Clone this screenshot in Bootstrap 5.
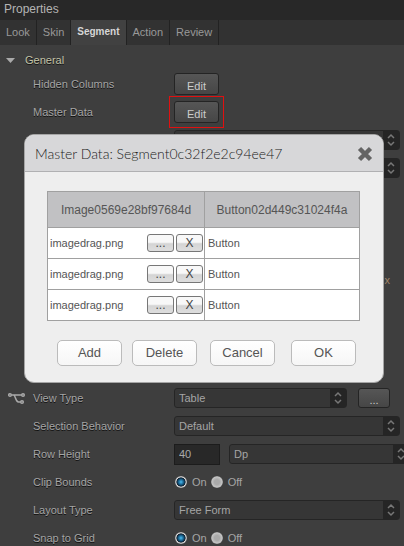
<!DOCTYPE html>
<html lang="en">
<head>
<meta charset="utf-8">
<meta name="viewport" content="width=device-width, initial-scale=1">
<title>Properties</title>
<link href="https://cdn.jsdelivr.net/npm/bootstrap@5.3.0/dist/css/bootstrap.min.css" rel="stylesheet">
<style>
body{background:#3e3e3e;color:#a5a5a5;font:11px/14px "Liberation Sans",Arial,sans-serif}
.panel-title{background:#282828;color:#b4b4b4;font-size:12px;line-height:18px;padding:0 4px;height:20px}
.panel-tabs{background:#323232;height:25px}
.panel-tabs .nav-link{color:#999;padding:0 6px;line-height:24px;border-radius:0;border-right:1px solid #222}
.panel-tabs .nav-link.active{color:#d6d6d6;background:#414141;font-size:10px;font-weight:bold}
.section-head{height:25px;padding:5px 9px 0 5px;color:#c3c3a8;text-shadow:0 1px 0 #111;background:none;border:0}
.prop{height:28px;padding-right:4px}
.prop-name{width:174px;padding-left:33px;text-shadow:0 1px 0 #111;position:relative}
.prop-name svg{position:absolute;left:8px;top:1px}
.prop-edge{padding-right:0;margin-right:-6px}
.dark-select{height:20px;color:#a5a5a5;border:1px solid #252525;border-radius:3px;padding:0 20px 0 4px;appearance:none;min-width:0;
 background:url("data:image/svg+xml,%3Csvg xmlns='http://www.w3.org/2000/svg' width='16' height='18' fill='none' stroke='%23777' stroke-width='1.5'%3E%3Cpath d='M5 7l3-3 3 3M5 11l3 3 3-3'/%3E%3C/svg%3E") right center no-repeat,linear-gradient(90deg,#363636 calc(100% - 16px),#252525 0)}
.dark-input{width:46px;height:21px;background:#282828;border:1px solid #1c1c1c;color:#aaa;padding:0 4px}
.dark-btn{height:22px;width:45px;padding:3px 0 0;font-size:11px;line-height:18px;color:#ccc;border:1px solid #242424;border-radius:3px;background:linear-gradient(#565656,#464646)}
.dark-btn.more{width:32px;height:20px;line-height:14px}
.marked{border:1px solid #e01010;padding:4px;margin-left:-5px}
.dot-radio{appearance:none;width:12px;height:12px;border-radius:50%;margin:0 5px 0 1px;background:radial-gradient(circle,#aaa 30%,#c4c4c4 60%,#888 72%)}
.dot-radio:checked{background:radial-gradient(circle at 50% 50%,#3da5d8 8%,#0f4a70 38%,#101c28 50%,#ddd 58%,#999 72%)}
.covered{margin-bottom:84px}
.after-cover{margin-bottom:90px;padding-right:14px;color:#a08468}
.dialog-layer{position:absolute;top:134px;left:0;right:0;padding:0 20px 0 24px}
.dialog{background:#eee;color:#555;border:1px solid #a5a5a5;border-radius:10px;overflow:hidden}
.dialog-head{background:#d7d7d9;border-bottom:1px solid #b0b0b2;height:37px;padding:1px 10px 0}
.dialog-head h1{font:300 14px/20px Lato,sans-serif;color:#222}
.dialog-body{padding:19px 23px 0 22px}
.data-grid{width:100%;table-layout:fixed;border-collapse:collapse;background:#fff}
.data-grid th,.data-grid td{border:1px solid #a0a0a0}
.data-grid th{height:36px;background:#c1c1c3;font-size:12px;font-weight:normal;text-align:center;padding:0}
.data-grid th:first-child{width:157px}
.data-grid td{height:31px;padding:0 1px 0 3px}
.data-grid td:first-child{padding-left:2px}
.cell-btn{width:27px;height:18px;padding:0;border:1px solid #777;border-radius:3px;color:#444;font-size:12px;line-height:16px;background:linear-gradient(#f8f8f8 45%,#d4d4d4 55%,#dedede)}
.cell-pair{gap:2px}
.dialog-foot{padding:19px 27px 16px 32px}
.pair-a{gap:10px}
.foot-btn{width:65px;height:26px;padding:0;border:1px solid #bbb;border-radius:5px;color:#555;font-size:13px;line-height:22px;background:linear-gradient(#fff,#f6f6f6)}
.more-gap{margin:0 10px 0 11px}
.unit-gap{margin-left:9px}
</style>
</head>
<body>
<main class="vh-100 overflow-hidden">
<header class="panel-title">Properties</header>
<nav class="nav panel-tabs flex-nowrap">
<a class="nav-link" href="#look">Look</a><a class="nav-link" href="#skin">Skin</a><a class="nav-link active" href="#segment">Segment</a><a class="nav-link" href="#action">Action</a><a class="nav-link" href="#review">Review</a>
</nav>
<button class="section-head d-flex align-items-center gap-2 w-100" type="button"><svg width="12" height="7"><path d="M1 1h9L5.500 6z" fill="#aaa"/></svg>General</button>
<div class="prop d-flex align-items-center"><span class="prop-name">Hidden Columns</span><button class="btn dark-btn" type="button">Edit</button></div>
<div class="prop d-flex align-items-center"><span class="prop-name">Master Data</span><span class="marked d-flex"><button class="btn dark-btn" type="button">Edit</button></span></div>
<div class="prop d-flex align-items-center"><span class="prop-name"></span><select class="dark-select flex-fill" aria-label="Data source"><option></option></select></div>
<div class="prop covered d-flex align-items-center"><span class="prop-name"></span><select class="dark-select flex-fill" aria-label="Template"><option></option></select></div>
<div class="prop after-cover d-flex align-items-center justify-content-end"><span>x</span></div>
<div class="prop d-flex align-items-center"><label class="prop-name" for="view"><svg width="18" height="13" fill="none" stroke="#aaa" stroke-width="1.500"><circle cx="2" cy="3" r="1.300"/><circle cx="15" cy="3" r="1.300"/><circle cx="14" cy="10" r="1.300"/><path d="M3.500 3h10M5.500 3c2 0 2 7 5 7h2"/></svg>View Type</label><select id="view" class="dark-select flex-fill"><option>Table</option></select><button class="btn dark-btn more more-gap" type="button">...</button></div>
<div class="prop d-flex align-items-center"><label class="prop-name" for="sel">Selection Behavior</label><select id="sel" class="dark-select flex-fill"><option>Default</option></select></div>
<div class="prop prop-edge d-flex align-items-center"><label class="prop-name" for="rowh">Row Height</label><input id="rowh" class="dark-input" value="40"><select class="dark-select flex-fill unit-gap" aria-label="Unit"><option>Dp</option></select></div>
<div class="prop d-flex align-items-center"><span class="prop-name">Clip Bounds</span><input class="dot-radio" type="radio" name="clip" id="c1" checked><label for="c1">On</label><input class="dot-radio ms-1" type="radio" name="clip" id="c2"><label for="c2">Off</label></div>
<div class="prop d-flex align-items-center"><label class="prop-name" for="lay">Layout Type</label><select id="lay" class="dark-select flex-fill"><option>Free Form</option></select></div>
<div class="prop d-flex align-items-center"><span class="prop-name">Snap to Grid</span><input class="dot-radio" type="radio" name="snap" id="s1" checked><label for="s1">On</label><input class="dot-radio ms-1" type="radio" name="snap" id="s2"><label for="s2">Off</label></div>
</main>
<div class="dialog-layer">
<section class="dialog" role="dialog" aria-labelledby="dlg-title">
<div class="dialog-head d-flex align-items-center justify-content-between"><h1 id="dlg-title" class="m-0 text-nowrap">Master Data: Segment0c32f2e2c94ee47</h1><button type="button" class="border-0 bg-transparent p-0 d-flex" aria-label="Close"><svg width="16" height="16" stroke="#646464" stroke-width="4.500"><path d="M2.500 2.500l11 11M13.500 2.500l-11 11"/></svg></button></div>
<div class="dialog-body">
<table class="data-grid">
<thead><tr><th scope="col">Image0569e28bf97684d</th><th scope="col">Button02d449c31024f4a</th></tr></thead>
<tbody>
<tr><td><div class="d-flex align-items-center cell-pair"><span class="me-auto">imagedrag.png</span><button class="cell-btn" type="button">...</button><button class="cell-btn" type="button">X</button></div></td><td>Button</td></tr>
<tr><td><div class="d-flex align-items-center cell-pair"><span class="me-auto">imagedrag.png</span><button class="cell-btn" type="button">...</button><button class="cell-btn" type="button">X</button></div></td><td>Button</td></tr>
<tr><td><div class="d-flex align-items-center cell-pair"><span class="me-auto">imagedrag.png</span><button class="cell-btn" type="button">...</button><button class="cell-btn" type="button">X</button></div></td><td>Button</td></tr>
</tbody></table></div>
<div class="dialog-foot d-flex justify-content-between"><div class="d-flex pair-a"><button class="foot-btn" type="button">Add</button><button class="foot-btn" type="button">Delete</button></div><div class="d-flex gap-3"><button class="foot-btn" type="button">Cancel</button><button class="foot-btn" type="button">OK</button></div></div>
</section></div>
<script src="https://cdn.jsdelivr.net/npm/bootstrap@5.3.0/dist/js/bootstrap.bundle.min.js"></script>
</body>
</html>
